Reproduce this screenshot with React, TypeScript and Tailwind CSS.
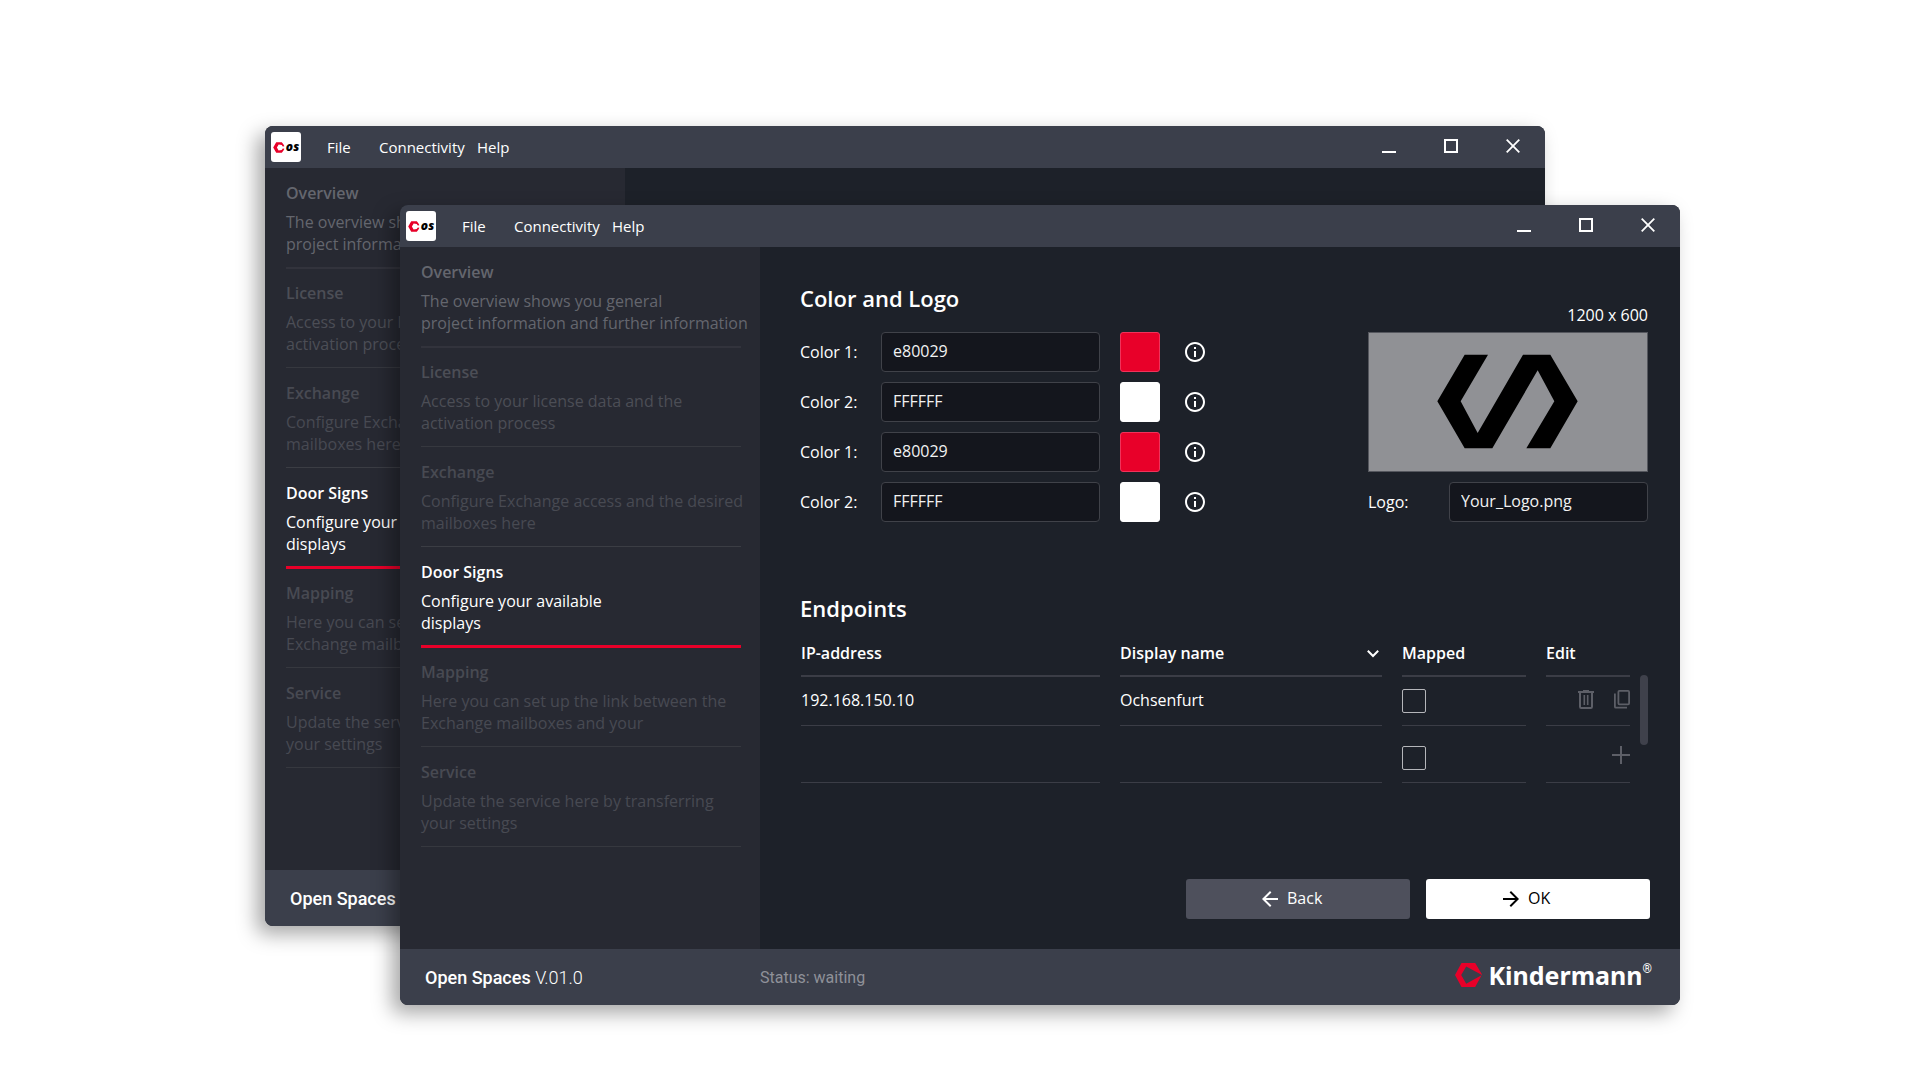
import { useId } from 'react'
import type { ReactNode } from 'react'
import { MdArrowBack, MdArrowForward, MdInfoOutline } from 'react-icons/md'

interface INavItem { title: string; lines: string[]; tone: string; rule: string }
interface IEndpoint { ip: string; name: string; filled: boolean }

const NAV: INavItem[] = [
  { title: 'Overview', lines: ['The overview shows you general', 'project information and further information'], tone: 'text-[#64666e]', rule: 'h-[101px] border-b-2 border-[#32333c] -mb-px' },
  { title: 'License', lines: ['Access to your license data and the', 'activation process'], tone: 'text-[#4c4e56]', rule: 'h-[100px] border-b border-[#36383f]' },
  { title: 'Exchange', lines: ['Configure Exchange access and the desired', 'mailboxes here'], tone: 'text-[#484a52]', rule: 'h-[100px] border-b border-[#3b3d44]' },
  { title: 'Door Signs', lines: ['Configure your available', 'displays'], tone: 'text-white', rule: 'h-[101px] border-b-[3px] border-[#e80029] -mb-px' },
  { title: 'Mapping', lines: ['Here you can set up the link between the', 'Exchange mailboxes and your'], tone: 'text-[#484a52]', rule: 'h-[100px] border-b border-[#36383f]' },
  { title: 'Service', lines: ['Update the service here by transferring', 'your settings'], tone: 'text-[#484a52]', rule: 'h-[100px] border-b border-[#36383f]' },
]

const COLORS = [
  { label: 'Color 1:', value: 'e80029', swatch: 'bg-[#e80029] border-[#f0335a]' },
  { label: 'Color 2:', value: 'FFFFFF', swatch: 'bg-white border-white' },
  { label: 'Color 1:', value: 'e80029', swatch: 'bg-[#e80029] border-[#f0335a]' },
  { label: 'Color 2:', value: 'FFFFFF', swatch: 'bg-white border-white' },
]

const ENDPOINTS: IEndpoint[] = [
  { ip: '192.168.150.10', name: 'Ochsenfurt', filled: true },
  { ip: '', name: '', filled: false },
]

const FIELD = 'h-10 min-w-0 rounded-[4px] border border-[#404249] bg-[#14161d] px-[11px] pb-0.5 text-base text-[#f2f2f2] outline-none'

function Hexagon({ className }: { className: string }) {
  return (
    <svg viewBox="0 0 27 24" className={className} aria-hidden="true">
      <path fill="#e80029" fillRule="evenodd" d="M6.500 0H20.200L27 11.600 20.200 24H6.500L0 12ZM11.200 3.400 6.200 12l5 8.800L27 11.900Z" />
    </svg>
  )
}

function AppIcon() {
  return (
    <span className="flex size-[30px] items-center justify-center gap-px rounded-[3px] bg-white">
      <svg viewBox="0 0 12 11" className="h-[11px] w-3" aria-hidden="true">
        <path fill="#e80029" d="M3.200.3h5.600l1.700 2.300.9 1.700-1.600.1-1.100-1.300-3-.6L3.900 5.500l1.700 3 3.100-.6 1.100-1.300 1.600.1-.9 1.700-1.700 2.300H3.200L.2 5.500Z" />
      </svg>
      <span className="pb-px font-['Open_Sans',sans-serif] text-[12px] leading-[12px] font-extrabold text-black italic">os</span>
    </span>
  )
}

function TitleBar() {
  return (
    <header className="flex h-[42px] items-center bg-[#3b3f4b] pl-1.5 text-[15px] text-white">
      <AppIcon />
      <nav className="ml-[26px] flex">
        <button className="w-[52px] text-left">File</button>
        <button className="w-[98px] text-left">Connectivity</button>
        <button>Help</button>
      </nav>
      <div className="ml-auto flex gap-12 pr-[25px] pb-0.5">
        <button aria-label="Minimize" className="size-3.5 border-b-2 border-white" />
        <button aria-label="Maximize" className="size-3.5 border-2 border-white" />
        <button aria-label="Close" className="size-3.5">
          <svg viewBox="0 0 14 14" className="size-3.5" fill="none" stroke="currentColor" strokeWidth="1.8"><path d="M.7.7l12.600 12.600M13.300.7.7 13.300" /></svg>
        </button>
      </div>
    </header>
  )
}

function Sidebar() {
  return (
    <aside className="w-[360px] shrink-0 bg-[#272932] pr-[19px] pl-[21px]">
      {NAV.map(item => (
        <a key={item.title} href="#" className={`block pt-3.5 leading-[22px] ${item.rule}`}>
          <span className={`block font-semibold ${item.tone}`}>{item.title}</span>
          <span className={`mt-[7px] block whitespace-nowrap ${item.tone}`}>
            {item.lines.map(line => <span key={line} className="block">{line}</span>)}
          </span>
        </a>
      ))}
    </aside>
  )
}

function StatusBar() {
  return (
    <footer className="flex h-14 items-center bg-[#3b3f4b] font-['Roboto',sans-serif]">
      <p className="w-[360px] shrink-0 pt-0.5 pl-[25px] text-lg text-white"><span className="font-medium">Open Spaces</span> <span className="font-light">V.01.0</span></p>
      <p className="pt-0.5 text-base text-[#8f9199]">Status: waiting</p>
      <p className="ml-auto flex items-center pr-7 pb-1">
        <Hexagon className="h-6 w-[27px]" />
        <span className="ml-1.5 font-['Noto_Sans',sans-serif] text-[25px] leading-8 font-bold text-white">Kindermann</span>
        <sup className="-top-1.5 text-xs text-white">®</sup>
      </p>
    </footer>
  )
}

function AppWindow({ className, children }: { className: string; children?: ReactNode }) {
  return (
    <section className={`absolute flex min-h-[800px] w-2/3 flex-col overflow-hidden rounded-lg bg-[#1d2129] shadow-[-8px_8px_20px_rgba(0,0,0,0.35)] ${className}`}>
      <TitleBar />
      <div className="flex flex-1">
        <Sidebar />
        {children}
      </div>
      <StatusBar />
    </section>
  )
}

function ColorRow({ label, value, swatch }: { label: string; value: string; swatch: string }) {
  const id = useId()
  return (
    <div className="flex items-center">
      <label htmlFor={id} className="w-[81px]">{label}</label>
      <input id={id} defaultValue={value} className={`w-[219px] ${FIELD}`} />
      <button aria-label="Pick color" className={`ml-5 size-10 rounded-[3px] border ${swatch}`} />
      <button aria-label="Info" className="ml-[23px]"><MdInfoOutline className="size-6" /></button>
    </div>
  )
}

function LogoPanel() {
  const id = useId()
  return (
    <div className="w-[280px]">
      <p className="mb-[5px] text-right leading-6">1200 x 600</p>
      <svg viewBox="88 130 834 414" className="block h-[140px] w-full border border-[#55575e] bg-[#909195]" role="img" aria-label="Logo preview">
        <path d="M375 195h70l-82 140 51 95 136-235h82l82 140-82 141h-72l84-141-50-93-136 234h-83l-82-141Z" />
      </svg>
      <div className="mt-2.5 flex items-center">
        <label htmlFor={id} className="w-[81px]">Logo:</label>
        <input id={id} defaultValue="Your_Logo.png" className={`flex-1 ${FIELD}`} />
      </div>
    </div>
  )
}

function RowActions({ filled }: { filled: boolean }) {
  if (!filled) {
    return (
      <button aria-label="Add endpoint" className="block">
        <svg viewBox="0 0 18 18" className="size-[18px]" stroke="currentColor" strokeWidth="2"><path d="M9 0v18M0 9h18" /></svg>
      </button>
    )
  }
  return (
    <>
      <button aria-label="Delete endpoint">
        <svg viewBox="0 0 16 19" className="block h-[19px] w-4" fill="none" stroke="currentColor">
          <path strokeWidth="2" d="M0 2h16M5 1h6M2 2.500v14.300q0 1.200 1.200 1.200h9.600q1.200 0 1.200-1.200V2.500" />
          <path strokeWidth="1.600" d="M6.300 5v10M9.700 5v10" />
        </svg>
      </button>
      <button aria-label="Duplicate endpoint">
        <svg viewBox="0 0 16 19" className="block h-[19px] w-4" fill="none" stroke="currentColor" strokeWidth="1.800">
          <rect x="4.400" y=".9" width="10.700" height="13.400" rx="1" />
          <path d="M.9 3.500v13.200q0 1 1 1H13" />
        </svg>
      </button>
    </>
  )
}

function EndpointTable() {
  const th = 'border-b-2 border-[#3b3d46] pb-2.5 text-left leading-6 font-semibold'
  const td = 'border-b border-[#3b3d46]'
  return (
    <div className="flex pl-px">
      <div className="flex-1">
        <table className="-mx-5 w-[calc(100%+40px)] table-fixed border-separate border-spacing-x-5 border-spacing-y-0">
          <thead>
            <tr>
              <th className={`w-[299px] ${th}`}>IP-address</th>
              <th className={th}>
                <button className="flex w-full items-center justify-between pr-[3px]">
                  Display name
                  <svg viewBox="0 0 12 8" className="mt-0.5 h-2 w-3" fill="none" stroke="currentColor" strokeWidth="2"><path d="M.8.8 6 6 11.200.8" /></svg>
                </button>
              </th>
              <th className={`w-[124px] ${th}`}>Mapped</th>
              <th className={`w-[84px] ${th}`}>Edit</th>
            </tr>
          </thead>
          <tbody>
            {ENDPOINTS.map((e, i) => (
              <tr key={i} className={e.filled ? 'h-[49px]' : 'h-[57px]'}>
                <td className={`${td} pb-0.5`}>{e.ip}</td>
                <td className={`${td} pb-0.5`}>{e.name}</td>
                <td className={`${td} ${e.filled ? '' : 'pt-2'}`}>
                  <input type="checkbox" aria-label={`Mapped ${i + 1}`} className="block size-6 appearance-none rounded-[2px] border border-[#b5b6ba]" />
                </td>
                <td className={`${td} ${e.filled ? 'pb-1' : 'pt-0.5'}`}>
                  <div className="flex justify-end gap-5 text-[#5d5f67]"><RowActions filled={e.filled} /></div>
                </td>
              </tr>
            ))}
          </tbody>
        </table>
      </div>
      <div className="mt-[34px] ml-2.5 h-[70px] w-2 rounded-full bg-[#3f414b]" />
    </div>
  )
}

export default function App() {
  return (
    <main className="relative min-h-screen overflow-hidden bg-white font-['Open_Sans',sans-serif]">
      <AppWindow className="top-[126px] left-[265px]" />
      <AppWindow className="top-[205px] left-[400px]">
        <div className="flex flex-1 flex-col pr-8 pl-10 text-white">
          <div className="flex justify-between">
            <div className="pt-[35px]">
              <h2 className="mb-[18px] text-[22px] leading-8 font-semibold">Color and Logo</h2>
              <div className="flex flex-col gap-2.5">
                {COLORS.map((c, i) => <ColorRow key={i} {...c} />)}
              </div>
            </div>
            <div className="pt-14"><LogoPanel /></div>
          </div>
          <div className="mt-[70px]">
            <h2 className="mb-[17px] text-[22px] leading-8 font-semibold">Endpoints</h2>
            <EndpointTable />
          </div>
          <div className="-mr-0.5 mt-auto mb-[30px] flex justify-end gap-4">
            <button className="flex h-10 w-56 items-center gap-[5px] rounded-[3px] bg-[#4e505c] pl-[72px]"><MdArrowBack className="size-6" /><span className="pb-0.5">Back</span></button>
            <button className="flex h-10 w-56 items-center gap-[5px] rounded-[3px] bg-white pl-[73px] text-black"><MdArrowForward className="size-6" /><span className="pb-0.5">OK</span></button>
          </div>
        </div>
      </AppWindow>
    </main>
  )
}
